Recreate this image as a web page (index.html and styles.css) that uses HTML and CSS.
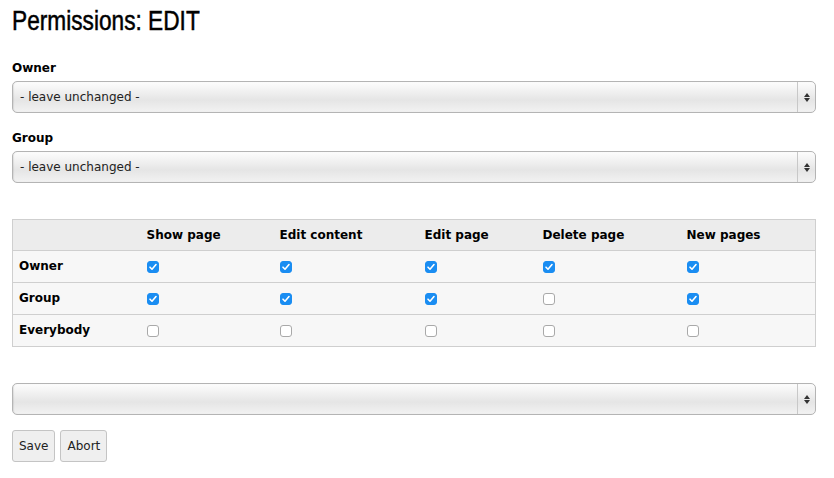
FILE: index.html
```html
<!DOCTYPE html>
<html lang="en">
<head>
<meta charset="utf-8">
<title>Permissions: EDIT</title>
<link rel="stylesheet" href="styles.css">
</head>
<body>
<div class="page">
  <h1 class="title"><span class="title-text">Permissions: EDIT</span></h1>

  <label class="field-label" for="owner">Owner</label>
  <div class="select">
    <select id="owner" class="select-input"><option>- leave unchanged -</option></select>
    <span class="select-arrow"><span class="tri-up"></span><span class="tri-down"></span></span>
  </div>

  <label class="field-label group-label" for="group">Group</label>
  <div class="select">
    <select id="group" class="select-input"><option>- leave unchanged -</option></select>
    <span class="select-arrow"><span class="tri-up"></span><span class="tri-down"></span></span>
  </div>

  <table class="perm">
    <colgroup>
      <col class="c1"><col class="c2"><col class="c3"><col class="c4"><col class="c5"><col>
    </colgroup>
    <thead>
      <tr><th></th><th>Show page</th><th>Edit content</th><th>Edit page</th><th>Delete page</th><th>New pages</th></tr>
    </thead>
    <tbody>
      <tr><th>Owner</th>
        <td><input type="checkbox" class="cb" checked></td>
        <td><input type="checkbox" class="cb" checked></td>
        <td><input type="checkbox" class="cb" checked></td>
        <td><input type="checkbox" class="cb" checked></td>
        <td><input type="checkbox" class="cb" checked></td></tr>
      <tr><th>Group</th>
        <td><input type="checkbox" class="cb" checked></td>
        <td><input type="checkbox" class="cb" checked></td>
        <td><input type="checkbox" class="cb" checked></td>
        <td><input type="checkbox" class="cb"></td>
        <td><input type="checkbox" class="cb" checked></td></tr>
      <tr><th>Everybody</th>
        <td><input type="checkbox" class="cb"></td>
        <td><input type="checkbox" class="cb"></td>
        <td><input type="checkbox" class="cb"></td>
        <td><input type="checkbox" class="cb"></td>
        <td><input type="checkbox" class="cb"></td></tr>
    </tbody>
  </table>

  <div class="select select-bottom">
    <select class="select-input"><option></option></select>
    <span class="select-arrow"><span class="tri-up"></span><span class="tri-down"></span></span>
  </div>

  <div class="buttons">
    <button class="btn" type="button">Save</button>
    <button class="btn" type="button">Abort</button>
  </div>
</div>
</body>
</html>
```

FILE: styles.css
```css
html, body {
  margin: 0;
  padding: 0;
  background: #fff;
}
body {
  font-family: "DejaVu Sans", Verdana, sans-serif;
  font-size: 12px;
  color: #000;
}
.page {
  display: flex;
  flex-direction: column;
  align-items: stretch;
  padding: 0 18px 0 12px;
}
.title {
  font-family: "Liberation Sans", Arial, sans-serif;
  font-weight: normal;
  font-size: 28px;
  line-height: 34px;
  margin: 4px 0 0 0;
  color: #000;
}
.title-text {
  display: inline-block;
  transform: scaleX(0.81);
  transform-origin: left center;
  -webkit-text-stroke: 0.5px #000;
}
.field-label {
  font-weight: bold;
  font-size: 12px;
  line-height: 16px;
  margin-top: 22px;
  margin-bottom: 5px;
}
.group-label {
  margin-top: 17px;
}
.select {
  display: flex;
  height: 32px;
  box-sizing: border-box;
  border: 1px solid #b4b4b4;
  border-radius: 5px;
  background: linear-gradient(#fdfdfd 0%, #ededed 40%, #e5e5e5 60%, #f2f2f2 100%);
  box-shadow: inset 1px 0 1px rgba(0,0,0,0.08);
}
.select-input {
  flex: 1;
  appearance: none;
  -webkit-appearance: none;
  border: 0;
  background: transparent;
  font-family: "DejaVu Sans", Verdana, sans-serif;
  font-size: 12px;
  color: #222;
  padding: 0 0 0 7px;
  margin: 0;
  outline: none;
}
.select-arrow {
  width: 17px;
  border-left: 1px solid #c8c8c8;
  display: flex;
  flex-direction: column;
  align-items: center;
  justify-content: center;
  gap: 1px;
}
.tri-up, .tri-down {
  width: 0;
  height: 0;
  border-left: 3px solid transparent;
  border-right: 3px solid transparent;
}
.tri-up { border-bottom: 4px solid #333; }
.tri-down { border-top: 4px solid #333; }

.perm {
  margin-top: 36px;
  border-collapse: collapse;
  table-layout: fixed;
  width: 100%;
  border: 1px solid #cfcfcf;
}
.c1 { width: 128px; }
.c2 { width: 133px; }
.c3 { width: 145px; }
.c4 { width: 118px; }
.c5 { width: 144px; }
.perm th, .perm td {
  text-align: left;
  padding: 0 6px;
  font-size: 12px;
  vertical-align: middle;
}
.perm thead th {
  background: #ececec;
  height: 30px;
  font-weight: bold;
}
.perm tbody tr {
  border-top: 1px solid #cfcfcf;
  background: #f7f7f7;
}
.perm tbody th, .perm tbody td {
  height: 31px;
}
.perm tbody th {
  font-weight: bold;
  padding-bottom: 2px;
  height: 29px;
}
.cb {
  appearance: none;
  -webkit-appearance: none;
  width: 12px;
  height: 12px;
  margin: 1px 0 0 0;
  box-sizing: border-box;
  border: 1px solid #a9a9a9;
  border-radius: 3px;
  background: #fff;
  display: block;
}
.cb:checked {
  border-color: #1a8df2;
  background: #1a8df2 url("data:image/svg+xml;utf8,<svg xmlns='http://www.w3.org/2000/svg' width='12' height='12' viewBox='0 0 12 12'><path d='M3 6.2 L5 8.2 L9 3.6' fill='none' stroke='white' stroke-width='1.6' stroke-linecap='round' stroke-linejoin='round'/></svg>") center/12px 12px no-repeat;
}
.select-bottom {
  margin-top: 36px;
}
.buttons {
  display: flex;
  gap: 5px;
  margin-top: 15px;
}
.btn {
  height: 32px;
  padding: 0 6px;
  font-family: "DejaVu Sans", Verdana, sans-serif;
  font-size: 12px;
  color: #222;
  background: #efefef;
  border: 1px solid #c4c4c4;
  border-radius: 3px;
}
```
